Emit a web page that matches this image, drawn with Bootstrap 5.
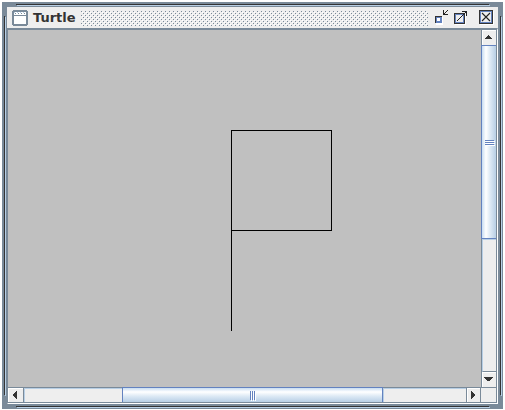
<!DOCTYPE html>
<html lang="en"><head><meta charset="utf-8"><title>Turtle</title>
<link href="https://cdn.jsdelivr.net/npm/bootstrap@5.3.0/dist/css/bootstrap.min.css" rel="stylesheet">
<style>
body{background:#fff;font-family:"DejaVu Sans",sans-serif;overflow:hidden;width:505px;height:410px}
svg{display:block;shape-rendering:crispEdges;flex:none}
.frame{margin:2px;width:501px;height:407px;background:#7a8a99;padding:5px}
.frame-edge{left:0;top:0;pointer-events:none}
.titlebar{height:21px;background:#eee;padding-left:5px;width:491px}
.caption{font-size:13px;font-weight:700;line-height:21px;color:#333;width:42px;margin-left:5px}
.grip{margin-left:6px}
.pane{width:491px;height:376px;border:solid #7a8a99;border-width:2px 1px 1px 1px;border-right-color:#fff;border-bottom-color:#fff;background:#eee}
.canvas-area{width:473px;height:357px;background:#c0c0c0}
.vbar{width:16px;height:357px;border-left:1px solid #7a8a99;border-right:1px solid #7a8a99}
.hbar{height:16px;width:489px;border-top:1px solid #7a8a99;border-bottom:1px solid #7a8a99}
.hbar>*{flex:none}
.step{background:#eee;box-shadow:inset 1px 1px #fff}
.vbtn{height:15px}
.vthumb{height:194px;border:1px solid #6382bf;border-right:0;margin-left:-1px;background:linear-gradient(90deg,#c8ddf2,#fff 28%,#dbe8f4 60%,#b8cfe5)}
.hthumb{width:261px;border:1px solid #6382bf;border-width:1px 1px 0;margin-top:-1px;background:linear-gradient(#c8ddf2,#fff 28%,#dbe8f4 60%,#b8cfe5)}
.vtrack{height:133px;border-left:1px solid #b8cfe5;border-top:1px solid #b8cfe5;border-bottom:1px solid #7a8a99}
.hleft{width:98px;border-left:1px solid #b8cfe5;border-top:1px solid #b8cfe5}
.hright{width:83px;border-left:1px solid #b8cfe5;border-top:1px solid #b8cfe5}
.hbtn{width:16px;border-right:1px solid #7a8a99}
.hbtn2{width:14px;border-left:1px solid #7a8a99}
.corner{width:17px;border-left:1px solid #7a8a99;border-right:1px solid #7a8a99}
</style></head><body>
<main class="frame position-relative">
<svg class="frame-edge position-absolute" width="501" height="407" viewBox="2 2 501 407"><path fill="#b8cfe5" d="M17 5h473v1H17zM17 407h473v1H17zM5 17h1v379H5zM501 17h1v379h-1z"/><path fill="#333" d="M16 4h473v1H16zM16 406h473v1H16zM4 16h1v379H4zM500 16h1v379h-1z"/></svg>
<header class="titlebar d-flex align-items-center">
<svg width="16" height="21" viewBox="0 -3 16 21"><path fill="#7a8a99" d="M1 0h14v1h1v14h-1v1H1v-1H0V1h1z"/><path fill="#fff" d="M2 2h12v12H2z"/><path fill="#7a8a99" d="M3 3h1v1H3zM6 3h1v1H6zM9 3h1v1H9zM12 3h1v1h-1zM2 5h12v1H2z"/><path fill="#b8cfe5" d="M2 2h1v1H2zM5 2h1v1H5zM8 2h1v1H8zM11 2h1v1h-1z"/></svg>
<span class="caption">Turtle</span>
<svg class="grip" width="348" height="21"><defs><pattern id="dots" y="4" width="4" height="4" patternUnits="userSpaceOnUse"><path fill="#7a8a99" d="M0 0h1v1H0zM2 2h1v1H2z"/><path fill="#fff" d="M1 1h1v1H1zM3 3h1v1H3z"/></pattern></defs><rect y="4" width="347" height="15" fill="url(#dots)"/></svg>
<svg width="68" height="21" viewBox="429 7 68 21">
<path fill="#fff" d="M436 17h7v8h-7z"/><path fill="#333" d="M435 16h7v7h-7z"/><path fill="#6382bf" d="M436 17h6v6h-6z"/><path fill="#fff" d="M437 18h3v3h-3z"/>
<path fill="#222" d="M443 10h1v5h-1zM443 14h5v1h-5zM444 13h1v1h-1zM445 12h1v1h-1zM446 11h1v1h-1zM447 10h1v1h-1z"/>
<path fill="#fff" d="M455 14h11v11h-11z"/><path fill="#333" d="M454 13h11v11h-11z"/><path fill="#6382bf" d="M455 14h9v9h-9z"/><path fill="#eee" d="M456 15h7v7h-7z"/>
<path fill="#222" d="M457 20h1v1h-1zM458 19h1v1h-1zM459 18h1v1h-1zM460 17h1v1h-1zM461 16h1v1h-1zM462 15h1v1h-1zM463 14h1v1h-1zM464 13h1v1h-1zM465 12h1v1h-1zM462 11h5v1h-5zM466 11h1v5h-1z"/>
<path fill="#fff" d="M480 11h14v14h-14z"/><path fill="#333" d="M479 10h14v14h-14z"/><path fill="#6382bf" d="M480 11h12v12h-12z"/><path fill="#eee" d="M481 12h10v10h-10z"/>
<path fill="none" stroke="#222" shape-rendering="auto" stroke-width="1.1" d="M482 13l8 8M490 13l-8 8"/>
</svg>
</header>
<section class="pane">
<div class="d-flex"><div class="canvas-area"><svg width="473" height="357"><path fill="none" stroke="#000" d="M223.500 301V100.500H323.500V200.500H223.500"/></svg></div>
<div class="vbar">
<div class="vbtn step"><svg width="14" height="15" viewBox="482 30 14 15"><path fill="#333" d="M488 35h1v1h-1zM487 36h3v1h-3zM486 37h5v1h-5zM485 38h7v1h-7z"/></svg></div>
<div class="vthumb"><svg width="14" height="192" viewBox="482 46 14 192"><path fill="#fff" d="M486 141h9v1h-9zM486 143h9v1h-9zM486 145h9v1h-9z"/><path fill="#6382bf" d="M485 140h9v1h-9zM485 142h9v1h-9zM485 144h9v1h-9z"/></svg></div>
<div class="vtrack"></div>
<div class="vbtn step"><svg width="14" height="15" viewBox="482 372 14 15"><path fill="#333" d="M484 377h9v1h-9zM485 378h7v1h-7zM486 379h5v1h-5zM487 380h3v1h-3z"/></svg></div>
</div></div>
<div class="hbar d-flex">
<div class="hbtn step"><svg width="15" height="14" viewBox="8 388 15 14"><path fill="#333" d="M16 391h1v8h-1zM15 392h1v6h-1zM14 393h1v4h-1zM13 394h1v2h-1z"/></svg></div>
<div class="hleft"></div>
<div class="hthumb"><svg width="259" height="14" viewBox="123 388 259 14"><path fill="#fff" d="M251 392h1v9h-1zM253 392h1v9h-1zM255 392h1v9h-1z"/><path fill="#6382bf" d="M250 391h1v9h-1zM252 391h1v9h-1zM254 391h1v9h-1z"/></svg></div>
<div class="hright"></div>
<div class="hbtn2 step"><svg width="13" height="14" viewBox="467 388 13 14"><path fill="#333" d="M471 391h1v8h-1zM472 392h1v6h-1zM473 393h1v4h-1zM474 394h1v2h-1z"/></svg></div>
<div class="corner"></div></div>
</section></main>
<script src="https://cdn.jsdelivr.net/npm/bootstrap@5.3.0/dist/js/bootstrap.bundle.min.js"></script>
</body></html>
